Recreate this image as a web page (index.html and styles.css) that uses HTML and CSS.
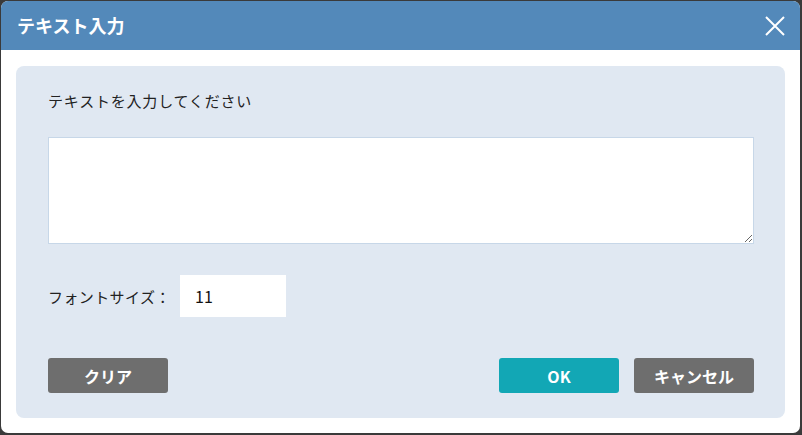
FILE: index.html
```html
<!DOCTYPE html>
<html lang="ja">
<head>
  <meta charset="UTF-8">
  <title>テキスト入力</title>
  <link rel="stylesheet" href="styles.css">
</head>
<body>
  <div class="dialog">
    <div class="dialog-header">
      <h1>テキスト入力</h1>
      <button class="close-btn" aria-label="close">
        <svg width="22" height="22" viewBox="0 0 22 22">
          <path d="M2 2 L20 20 M20 2 L2 20" stroke="#fff" stroke-width="2" fill="none"/>
        </svg>
      </button>
    </div>
    <div class="dialog-body">
      <div class="panel">
        <p class="prompt">テキストを入力してください</p>
        <textarea id="text" class="text-input"></textarea>
        <div class="size-row">
          <label for="size">フォントサイズ：</label>
          <input type="text" id="size" class="size-input" value="11">
        </div>
        <div class="actions">
          <button class="btn btn-gray">クリア</button>
          <div class="actions-right">
            <button class="btn btn-ok">OK</button>
            <button class="btn btn-gray">キャンセル</button>
          </div>
        </div>
      </div>
    </div>
  </div>
</body>
</html>
```

FILE: styles.css
```css
html, body {
  margin: 0;
  height: 100%;
}
body {
  background: #3a3a3a;
  font-family: "Noto Sans CJK JP", "Noto Sans", sans-serif;
  padding: 1px 2px 2px 1px;
  box-sizing: border-box;
}
.dialog {
  background: #fff;
  border-radius: 7px;
  height: 432px;
  overflow: hidden;
  display: flex;
  flex-direction: column;
}
.dialog-header {
  background: #5389ba;
  height: 49px;
  display: flex;
  align-items: center;
  justify-content: space-between;
  padding: 0 14px 0 16px;
  flex-shrink: 0;
}
.dialog-header h1 {
  margin: 0 0 2px;
  color: #fff;
  font-size: 18px;
  font-weight: bold;
}
.close-btn {
  background: none;
  border: none;
  padding: 0;
  width: 22px;
  height: 22px;
  cursor: pointer;
}
.dialog-body {
  padding: 16px 15px 15px 15px;
  flex: 1;
  display: flex;
}
.panel {
  flex: 1;
  background: #e0e8f2;
  border-radius: 8px;
  padding: 24px 31px 25px 32px;
  display: flex;
  flex-direction: column;
}
.prompt {
  margin: 0 0 25px;
  font-size: 15px;
  letter-spacing: 0.8px;
  line-height: 22px;
  color: #222;
}
.text-input {
  height: 107px;
  border: 1px solid #c7d7e8;
  background: #fff;
  box-sizing: border-box;
  margin: 0;
  padding: 6px;
  font-family: inherit;
}
.size-row {
  display: flex;
  align-items: center;
  margin-top: 31px;
}
.size-row label {
  font-size: 15px;
  letter-spacing: 0.4px;
  color: #222;
  width: 132px;
}
.size-input {
  width: 106px;
  height: 42px;
  border: none;
  box-sizing: border-box;
  padding: 0 15px;
  font-size: 16px;
  font-family: inherit;
  color: #111;
}
.actions {
  display: flex;
  justify-content: space-between;
  margin-top: 41px;
}
.actions-right {
  display: flex;
  gap: 15px;
}
.btn {
  width: 120px;
  height: 35px;
  border: none;
  border-radius: 3px;
  color: #fff;
  font-family: inherit;
  font-size: 16px;
  font-weight: bold;
  cursor: pointer;
}
.btn-gray {
  background: #6e6e6e;
}
.btn-ok {
  background: #12a7b5;
}
```
